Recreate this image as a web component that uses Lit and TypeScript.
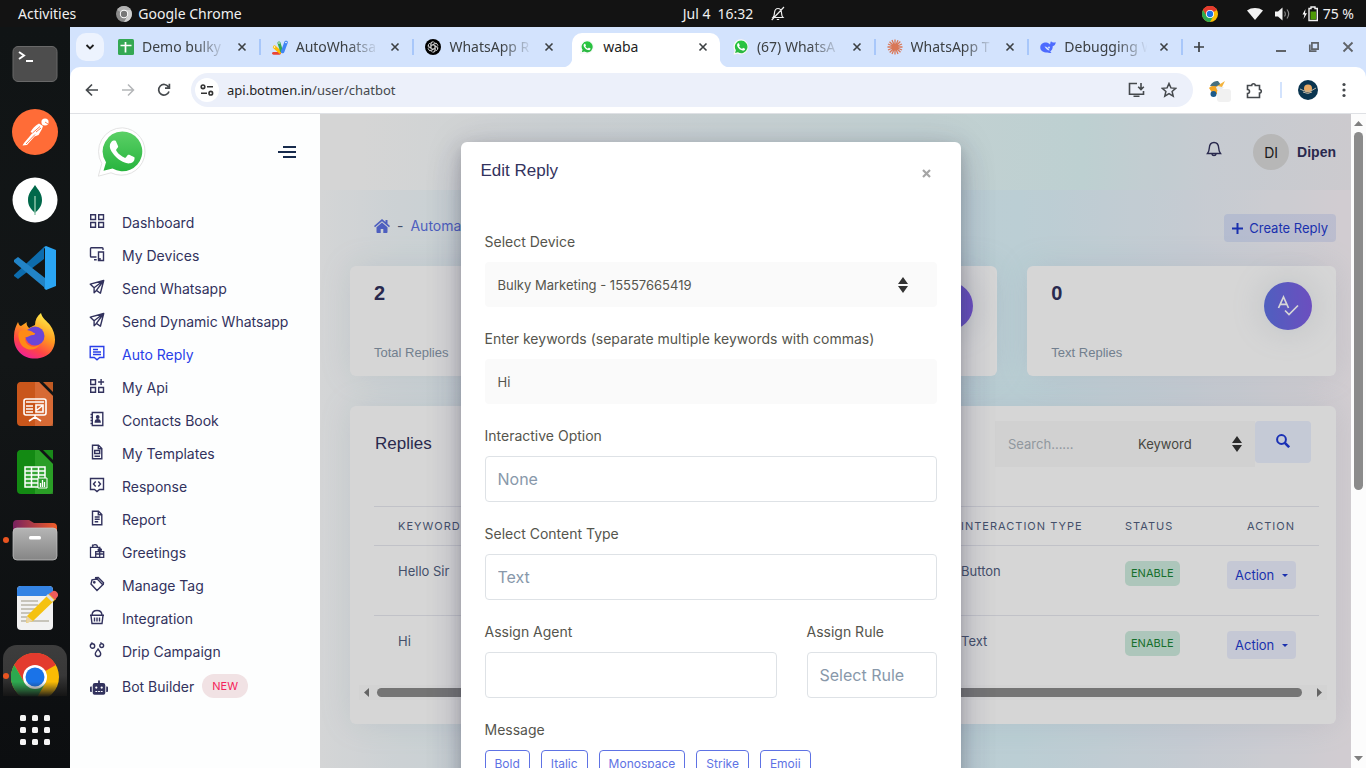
import { LitElement, html, css, svg } from "lit";
import { customElement } from "lit/decorators.js";

const handset =
  "M17.472 14.382c-.297-.149-1.758-.867-2.03-.967-.273-.099-.471-.148-.67.15-.197.297-.767.966-.94 1.164-.173.199-.347.223-.644.075-.297-.15-1.255-.463-2.39-1.475-.883-.788-1.48-1.761-1.653-2.059-.173-.297-.018-.458.13-.606.134-.133.298-.347.446-.52.149-.174.198-.298.298-.497.099-.198.05-.371-.025-.52-.075-.149-.669-1.612-.916-2.207-.242-.579-.487-.5-.669-.51-.173-.008-.371-.01-.57-.01-.198 0-.52.074-.792.372-.272.297-1.04 1.016-1.04 2.479 0 1.462 1.065 2.875 1.213 3.074.149.198 2.096 3.2 5.077 4.487.709.306 1.262.489 1.694.625.712.227 1.36.195 1.871.118.571-.085 1.758-.719 2.006-1.413.248-.694.248-1.289.173-1.413-.074-.124-.272-.198-.57-.347";

const whatsapp = (size: number, a = "#5bd066", b = "#27b43e") => html`<svg width=${size} height=${size} viewBox="0 0 50 50" aria-hidden="true">
  <defs><linearGradient id="wa" x1="0" y1="0" x2="0" y2="1"><stop offset="0" stop-color=${a} /><stop offset="1" stop-color=${b} /></linearGradient></defs>
  <path d="M25.500.8A23.700 23.700 0 1 1 14 45.800L1.300 49.200 4.800 36.500A23.700 23.700 0 0 1 25.500.8Z" fill="#fff" stroke="#e3e3e3" stroke-width="1" />
  <path d="M25.300 4.600A19.800 19.800 0 1 1 15.500 41.500L6.500 43.800 9 35.200A19.800 19.800 0 0 1 25.300 4.600Z" fill="url(#wa)" />
  <path d=${handset} fill="#fff" transform="translate(0.500 0.300) scale(2.050)" />
</svg>`;

const chromeLogo = (size: number) => html`<svg width=${size} height=${size} viewBox="0 0 48 48" aria-hidden="true">
  <circle cx="24" cy="24" r="24" fill="#fbbc04" />
  <path d="M24 24 3.200 12A24 24 0 0 1 44.800 12Z" fill="#e33b2e" />
  <path d="M24 12H44.800A24 24 0 0 0 3.200 12L13.600 30Z" fill="#e33b2e" />
  <path d="M3.200 12A24 24 0 0 0 24 48L34.400 30 24 36 13.600 30Z" fill="#2da94f" />
  <circle cx="24" cy="24" r="12" fill="#fff" /><circle cx="24" cy="24" r="9.500" fill="#1a73e8" />
</svg>`;

const tabIcons = {
  sheets: svg`<rect width="16" height="16" rx="1.500" fill="#34a853"/><path d="M7.500 3v10.500M2.500 6.500h11" stroke="#fff" stroke-width="1.700"/>`,
  script: svg`<path d="M1.500 14.300h6" stroke="#ea4335" stroke-width="2.800" stroke-linecap="round"/><path d="m2.500 8 5.500 5" stroke="#fbbc04" stroke-width="3.200" stroke-linecap="round"/><path d="m7 4 2.500 8" stroke="#34a853" stroke-width="3" stroke-linecap="round"/><path d="m14 3.500-3.300 9" stroke="#4285f4" stroke-width="3.600" stroke-linecap="round"/><circle cx="7" cy="4" r=".8" fill="#fff"/><circle cx="14" cy="3.500" r=".8" fill="#fff"/><circle cx="2.500" cy="8" r=".8" fill="#fff"/>`,
  gpt: svg`<circle cx="8" cy="8" r="8" fill="#000"/><g fill="none" stroke="#fff" stroke-width=".6">${[0, 60, 120, 180, 240, 300].map((r) => svg`<path d="M6.200 8.800V4.800a2 2 0 0 1 3.700-1M6.200 6.400 9.600 4.400a2 2 0 0 1 2.700.8" transform="rotate(${r} 8 8)"/>`)}</g>`,
  claude: svg`<path d="M8 .5v15M.5 8h15M2.500 2.700l11 10.600M13.300 2.500 2.700 13.500M5 1l6 14M11 1.200 5 15M1 5l14 6M15 5 1 11" stroke="#d97757" stroke-width="1.300"/>`,
  deepseek: svg`<path d="M.3 8.500C.3 5 3 3.300 6.500 3.500c1.500 0 2.500 1 3.500 2 .6-1.300.2-2.600 1.200-3.200.5 1.400 1.800 1.300 4.600.9-.2 2.300-1.500 3.600-3.100 4 .2 2.600-1 4.300-2.500 5.200l1.300 1.300c-1.800.4-3 .2-4.200-.2C3.300 13.500.3 12 .3 8.500Z" fill="#4d6bfe"/><path d="M4.500 7.500c2 0 4 1.500 5.200 4-2.200-.3-3.500-1.200-5.200-4Z" fill="#d3e3fd"/><circle cx="9" cy="8.500" r="1" fill="#d3e3fd"/>`,
};

const tabs = [
  { title: "Demo bulky", icon: tabIcons.sheets },
  { title: "AutoWhatsa", icon: tabIcons.script },
  { title: "WhatsApp R", icon: tabIcons.gpt },
  { title: "waba", wa: true, active: true },
  { title: "(67) WhatsA", wa: true },
  { title: "WhatsApp T", icon: tabIcons.claude },
  { title: "Debugging W", icon: tabIcons.deepseek },
];

const doc = svg`<path d="M3.500 1.200h6l3.300 3.300v10.300H3.500Z M9.300 1.200v3.500h3.500" />`;
const plane = svg`<path d="M14.700 1.500 1.300 5.200l3.800 3.500v5l2.300-2.300 4 2.800ZM14.700 1.500 5.100 8.700M14.700 1.500 7.400 11.400" stroke-linejoin="round"/>`;
const navItems = [
  { label: "Dashboard", icon: svg`<path d="M1.700 1.700h4.800v4.800H1.700zM9.700 1.700h4.800v4.800H9.700zM1.700 9.500h4.800v4.800H1.700zM9.700 9.500h4.800v4.800H9.700z"/>` },
  { label: "My Devices", icon: svg`<path d="M14 4V2.500c0-.5-.4-.8-.8-.8H2.300c-.5 0-.8.3-.8.8v7.700c0 .5.300.800.8.800h5.200M5 13.700h2.700M9.500 6h5v8.500h-5zM11 14v-2"/>` },
  { label: "Send Whatsapp", icon: plane },
  { label: "Send Dynamic Whatsapp", icon: plane },
  { label: "Auto Reply", active: true, icon: svg`<path d="M1.200 1.500h13.600v11H10.700L8 14.800 5.300 12.500H1.200ZM4 4.500h5M4 7h8M4 9.500h8"/>` },
  { label: "My Api", icon: svg`<path d="M1.700 1.700h4.800v4.800H1.700zM12.100 1v6M9.100 4h6M1.700 9.500h4.800v4.800H1.700zM9.700 9.500h4.800v4.800H9.700z"/>` },
  { label: "Contacts Book", icon: svg`<path d="M3.300 1.500h10.500v13H3.300ZM1.500 3.500h2M1.500 6.500h2M1.500 9.500h2M1.500 12.500h2"/><circle cx="8.700" cy="6" r="1.200" fill="currentColor"/><path d="M6.300 11c.2-3 4.600-3 4.800 0Z" fill="currentColor"/>` },
  { label: "My Templates", icon: svg`${doc}<path d="M5.700 6.500h5v3h-5zM5.500 12.200h5.500"/>` },
  { label: "Response", icon: svg`<path d="M1.500 1.500h13v11H10.500L8 14.500 5.500 12.500H1.500ZM6.700 4.500 4.500 7l2.200 2.500M9.300 4.500 11.500 7 9.300 9.500"/>` },
  { label: "Report", icon: svg`${doc}<path d="M5.700 7h5M5.700 9.300h5M5.700 11.700h3.500"/>` },
  { label: "Greetings", icon: svg`<path d="M6.500 14.300H1.500V4.300h9.300v2M3.500 4.300c0-3.600 5-3.600 5 0M3 1.800l1 .8M6.700 8.700h8v5.600h-8ZM6.500 11h8.500M10.700 8.500v6M10.700 8.500c-1.800-.5-2-2.500-.8-2.500.800 0 .8 1.500.8 2.500 0-1 .2-2.500 1-2.500 1.200 0 .8 2-1 2.500" stroke-width="1.300"/>` },
  { label: "Manage Tag", icon: svg`<path d="M3 3.800 2 8l6 6.500 5.800-5.800L8.200 3Zm3-2 3.200-.3 5.300 5.300-.3 2"/><circle cx="5.300" cy="6.300" r=".7"/>` },
  { label: "Integration", icon: svg`<path d="M1 6.300h14M2 6.500l1 8h10l1-8M3 6c.3-6 9.700-6 10 0M5.500 8.500v4M8 8.500v4M10.500 8.500v4"/>` },
  { label: "Drip Campaign", icon: svg`<circle cx="3.500" cy="4" r="2.200"/><circle cx="12.700" cy="3.600" r="1.900"/><path d="M9 7c2 3 2.700 3.500 2.700 4.800a2.700 2.700 0 0 1-5.400 0C6.300 10.500 7.500 9.500 9 7ZM11.500 1l1-.5M2 1.500 3.500.7"/>` },
];

const robot = html`<svg class="bot" width="18" height="15" viewBox="0 0 640 512" fill="currentColor" aria-hidden="true"><path d="M32 224h32v192H32a32 32 0 0 1-32-32V256a32 32 0 0 1 32-32zm512-48v272a64 64 0 0 1-64 64H160a64 64 0 0 1-64-64V176a80 80 0 0 1 80-80h112V32a32 32 0 0 1 64 0v64h112a80 80 0 0 1 80 80zm-280 80a40 40 0 1 0-40 40 40 40 0 0 0 40-40zm-8 128h-64v32h64zm96 0h-64v32h64zm104-128a40 40 0 1 0-40 40 40 40 0 0 0 40-40zm-8 128h-64v32h64zm192-128v128a32 32 0 0 1-32 32h-32V224h32a32 32 0 0 1 32 32z"/></svg>`;

const caretPair = html`<svg class="updown" width="10" height="16" viewBox="0 0 10 16" aria-hidden="true"><path d="M5 0l5 7H0zM5 16 0 9h10z" fill="#333" /></svg>`;

const closeX = html`<svg width="10" height="10" viewBox="0 0 10 10" aria-hidden="true"><path d="m1.500 1.500 7 7m0-7-7 7" stroke="currentColor" stroke-width="1.600" /></svg>`;

@customElement("desktop-bar")
class DesktopBar extends LitElement {
  static styles = css`
    :host { display: grid; grid-template-columns: 1fr auto 1fr; align-items: center; height: 27px; background: #131313; color: #f0f0f0; font: 14px/27px "Noto Sans", sans-serif; white-space: nowrap; }
    div { display: flex; align-items: center; }
    svg { display: block; }
    .left { padding-left: 18px; gap: 40px; }
    .app { gap: 6px; }
    .clock { gap: 18px; padding-left: 102px; }
    .right { justify-content: flex-end; padding-right: 12px; gap: 12px; }
    .chrome { margin-right: 17px; }
    .battery { gap: 4px; }
  `;
  render() {
    return html`
      <div class="left">
        <span>Activities</span>
        <div class="app">
          <svg width="16" height="16" viewBox="0 0 16 16"><circle cx="8" cy="8" r="8" fill="#8a8a8a" /><path d="M8 8 1.100 4A8 8 0 0 1 14.900 4Z" fill="#b0b0b0" /><path d="M8 4h6.900A8 8 0 0 1 8 16l3.500-6Z" fill="#cfcfcf" /><circle cx="8" cy="8" r="4.200" fill="#fff" /><circle cx="8" cy="8" r="3.200" fill="#777" /></svg>
          <span>Google Chrome</span>
        </div>
      </div>
      <div class="clock">
        <span>Jul 4&ensp;16:32</span>
        <svg width="14" height="15" viewBox="0 0 14 15" fill="none" stroke="#eee" stroke-width="1.200"><path d="M2 11.500c1.500-1.500 1.300-3 1.500-5C3.800 4 5 2.500 7 2.500s3.200 1.500 3.500 4c.2 2 0 3.500 1.500 5ZM.7 14 13 1M5.800 13.500h2.400" /></svg>
      </div>
      <div class="right">
        <div class="chrome">${chromeLogo(16)}</div>
        <svg width="16" height="12" viewBox="0 0 16 12"><path d="M0 2.500C4.500-.8 11.500-.8 16 2.500L8 12Z" fill="#f2f2f2" /></svg>
        <svg width="15" height="14" viewBox="0 0 15 14"><path d="M0 4.500h3L7.500.5v13L3 9.500H0Z" fill="#f2f2f2" /><path d="M9.500 4.500c1 1.500 1 3.500 0 5M12 2.500c2 2.700 2 6.300 0 9" fill="none" stroke="#888" stroke-width="1.200" /></svg>
        <div class="battery">
          <svg width="17" height="16" viewBox="0 0 17 16"><path d="M3.500 3 .5 8.500h2L1.500 13 5 7.200H3Z" fill="#fff" /><path d="M7 2.500h2V1h4v1.500h2.300v12H7Z" fill="none" stroke="#f0f0f0" stroke-width="1.400" /><path d="M8.500 5.500h5.500v8H8.500z" fill="#4e9a06" /></svg>
          <span>75 %</span>
        </div>
      </div>`;
  }
}

@customElement("app-dock")
class AppDock extends LitElement {
  static styles = css`
    :host { display: flex; flex-direction: column; background: linear-gradient(#101415, #131617 45%, #0c0e10); padding-top: 3px; }
    button { flex: none; position: relative; height: 68px; width: 70px; padding: 0; border: 0; background: none; display: flex; align-items: center; justify-content: center; }
    .current::before { content: ""; position: absolute; inset: 3px 3px 14px; border-radius: 14px 14px 0 0; background: linear-gradient(#3d3d3d, #383838 60%, #151515); }
    .current { align-items: flex-start; padding-top: 11px; }
    .current svg { -webkit-mask-image: linear-gradient(#000 60%, transparent 92%); mask-image: linear-gradient(#000 60%, transparent 92%); }
    .running::after { content: ""; position: absolute; left: 3px; top: 31px; width: 6px; height: 6px; border-radius: 50%; background: #e95420; }
    svg { position: relative; display: block; }
    .grid { height: 40px; }
  `;
  render() {
    return html`
      <button aria-label="Terminal"><svg width="46" height="46" viewBox="0 0 46 46"><rect x="1" y="5.500" width="44" height="35" rx="5" fill="#4d4d4d" stroke="#696969" /><path d="m7 11 5 3.500L7 18M14 20h7" fill="none" stroke="#fff" stroke-width="2" /></svg></button>
      <button aria-label="Postman"><svg width="46" height="46" viewBox="0 0 46 46"><circle cx="23" cy="23" r="23" fill="#ff6c37" /><path d="m31 17-4-2.500c-4 2-6.500 5-8.500 8.500l2 1-8.500 10-1.500 2.500 4.500-.5 7.500-8.500 4-1.500 3.500-6Z" fill="#fff" /><circle cx="33" cy="13" r="3.600" fill="#fff" /><path d="m33 13 3 2M20.500 24l7.500-6.500M14 35l9-9.500M24 23l5-4" stroke="#ff6c37" stroke-width=".9" /></svg></button>
      <button aria-label="MongoDB"><svg width="46" height="46" viewBox="0 0 46 46"><circle cx="23" cy="23" r="22.500" fill="#fff" /><path d="M23 8c3 5 7 8 7 15 0 6-3 9-7 13-4-4-7-7-7-13 0-7 4-10 7-15Z" fill="#00684a" /><path d="M23 19v19" stroke="#93c9ae" stroke-width="1.400" /></svg></button>
      <button aria-label="Visual Studio Code"><svg width="44" height="44" viewBox="0 0 44 44"><path d="M1 29 31 1v12L5 33 1 30Z" fill="#0d6cad" /><path d="M1 14l4-3 27 21v10L1 16Z" fill="#2284c7" /><path d="m31 1 2-1 10 4v36l-10 4-2-2 1-1V3Z" fill="#2aa5f4" /></svg></button>
      <button aria-label="Firefox"><svg width="44" height="46" viewBox="0 0 44 46"><defs><linearGradient id="ff" x1=".8" y1="0" x2=".3" y2="1"><stop offset="0" stop-color="#fff44f" /><stop offset=".45" stop-color="#ff9a1f" /><stop offset=".75" stop-color="#ff4545" /><stop offset="1" stop-color="#f0209a" /></linearGradient></defs><path d="M5 9c1 3 2 4 3 4l6-4c-1 2 0 4 2 6l6-3c0-5 2-9 6-12 1 5 6 8 9 12 9 12 6 30-10 33C12 48 0 38 1 23c0-6 2-10 4-14Z" fill="url(#ff)" /><circle cx="22" cy="23" r="9.500" fill="#6b46d6" /><path d="M7 18c4-2 11-1 14 2 2 0 1 2-1 2-3 0-5 3-8 2-1 8 9 13 15 7-4 9-19 7-21-5-1-4-1-6 1-8Z" fill="#ff8a16" /></svg></button>
      <button aria-label="Impress"><svg width="38" height="46" viewBox="0 0 38 46"><path d="M4 1h19l14 14v26a4 4 0 0 1-4 4H5a4 4 0 0 1-4-4V5a4 4 0 0 1 3-4Z" fill="#c9561b" /><path d="M19 1h4l14 14v30H19Z" fill="#dd7340" opacity=".7" /><path d="M27 1h10v10Z" fill="#c05a23" /><g fill="none" stroke="#fff" stroke-width="1.600"><rect x="8" y="18" width="22" height="16" rx="2" /><path d="M10 21h18M10 25h7M10 28h7M10 31h7M20 31V24h7v7Zm1-2 5-4M19 34v2M13 40l6-4 6 4" /></g></svg></button>
      <button aria-label="Calc"><svg width="38" height="46" viewBox="0 0 38 46"><path d="M4 1h19l14 14v26a4 4 0 0 1-4 4H5a4 4 0 0 1-4-4V5a4 4 0 0 1 3-4Z" fill="#138a13" /><path d="M19 1h4l14 14v30H19Z" fill="#34a62f" opacity=".7" /><path d="M27 1h10v10Z" fill="#198919" /><path d="M9 18h20v20H9ZM9 22h20M9 26h20M9 30h20M9 34h20M15.500 18v20M22.500 18v20" fill="#36a636" stroke="#fff" stroke-width="1.500" /><path d="M22 29h9v10h-9Z" fill="#2c9c2c" stroke="#fff" /><path d="M24.500 38v-4M26.500 38v-7M28.500 38v-5" stroke="#fff" stroke-width="1.300" /></svg></button>
      <button class="running" aria-label="Files"><svg width="46" height="42" viewBox="0 0 46 42"><defs><linearGradient id="fo"><stop offset="0" stop-color="#77215f" /><stop offset="1" stop-color="#f05d28" /></linearGradient><linearGradient id="fb" x1="0" y1="0" x2="0" y2="1"><stop offset="0" stop-color="#b5b5b5" /><stop offset="1" stop-color="#858585" /></linearGradient></defs><path d="M1 20V5a4 4 0 0 1 4-4h12l5 3h19a4 4 0 0 1 4 4v12Z" fill="url(#fo)" /><rect x="1" y="9" width="44" height="32" rx="4" fill="url(#fb)" stroke="#c7c7c7" stroke-width=".7" /><rect x="17" y="17" width="12" height="3.500" rx="1.500" fill="#fff" /></svg></button>
      <button aria-label="Text Editor"><svg width="46" height="46" viewBox="0 0 46 46"><rect x="5" y="1" width="36" height="44" rx="4" fill="#f2f2f2" /><path d="M5 11V5a4 4 0 0 1 4-4h28a4 4 0 0 1 4 4v6Z" fill="#3584e4" /><path d="M9 16h17M9 20h17M9 24h17M9 28h15M9 32h12M9 36h28" stroke="#b9b5a8" stroke-width="1.600" /><path d="m14 38 1-7L38 8l6 6-23 22Z" fill="#f5c211" /><path d="m14 38 1-7 6 5Z" fill="#e8d4a8" /><path d="m37 9 4-3c3-1 6 3 5 5l-3 4Z" fill="#ed5b5b" /><path d="m34 11 6 6 2-2-6-6Z" fill="#ddd" /></svg></button>
      <button class="current running" aria-label="Google Chrome">${chromeLogo(48)}</button>
      <button class="grid" aria-label="Show Applications"><svg width="30" height="30" viewBox="0 0 30 30" fill="#f5f5f5">${[0, 12, 24].map((y) => [0, 12, 24].map((x) => svg`<rect x=${x} y=${y} width="6" height="6" rx="1.500" />`))}</svg></button>`;
  }
}

@customElement("browser-chrome")
class BrowserChrome extends LitElement {
  static styles = css`
    :host { display: block; font: 14px/20px "Noto Sans", sans-serif; color: #3c4043; background: #d3e3fd; }
    button { border: 0; padding: 0; background: none; color: inherit; display: flex; align-items: center; justify-content: center; }
    svg { display: block; flex: none; }
    .strip { display: flex; align-items: center; height: 40px; padding: 0 12px 0 6px; }
    .search-tabs { width: 28px; height: 28px; border-radius: 10px; background: #edf3fe; color: #1f1f1f; margin-right: 3px; }
    .tabs { flex: 0 1 1076px; min-width: 0; display: flex; align-self: stretch; padding-top: 6px; }
    .tab { flex: 1 1 0; min-width: 0; display: flex; align-items: center; gap: 8px; height: 34px; padding: 0 12px 6px 11px; box-sizing: border-box; border-right: 2px solid transparent; position: relative; }
    .tab::after { content: ""; position: absolute; right: -2px; top: 6px; width: 2px; height: 16px; background: #a8c7fa; }
    .tab.active::after, .tab.before::after { display: none; }
    .tab.active::before { content: ""; position: absolute; inset: 0 0 0 4px; background: #fff; border-radius: 10px 10px 0 0; }
    .tab.active .corner { position: absolute; left: -6px; right: -10px; bottom: 0; height: 10px; background: radial-gradient(circle at 0 0, transparent 10px, #fff 11px) left / 10px 10px no-repeat, radial-gradient(circle at 100% 0, transparent 10px, #fff 11px) right / 10px 10px no-repeat; }
    .tab > svg, .tab > .title, .tab > button { position: relative; }
    .title { flex: 1; overflow: hidden; white-space: nowrap; -webkit-mask-image: linear-gradient(90deg, #000 60%, transparent 96%); mask-image: linear-gradient(90deg, #000 60%, transparent 96%); }
    .active .title { color: #1f1f1f; -webkit-mask-image: none; mask-image: none; }
    .fav { display: flex; position: relative; width: 16px; justify-content: center; }
    .plus { margin-left: 8px; width: 16px; }
    .window { margin-left: auto; display: flex; gap: 22px; color: #5f6368; }
    .toolbar { display: flex; align-items: center; height: 47px; box-sizing: border-box; background: #fff; border-radius: 10px 10px 0 0; border-bottom: 1px solid #dfe1e5; padding: 0 14px 0 14px; color: #45494d; }
    .nav { display: flex; gap: 20px; margin-right: 19px; }
    .nav button, .end button { width: 16px; height: 20px; }
    .forward { color: #b4b6b8; }
    .address { flex: 1; display: flex; align-items: center; height: 34px; padding: 0 16px 0 4px; box-sizing: border-box; border-radius: 17px; background: #ecf0fa; }
    .site { width: 24px; height: 24px; border-radius: 50%; background: #fff; margin-right: 8px; }
    .url { flex: 1; min-width: 0; white-space: nowrap; font-size: 13px; }
    .url b { font-weight: 400; color: #1f1f1f; }
    .actions { display: flex; gap: 16px; }
    .end { display: flex; align-items: center; gap: 18px; padding-left: 19px; }
    .end .more { margin-left: 2px; }
    .bar { width: 2px; height: 16px; background: #d3e3fd; }
  `;
  render() {
    return html`
      <div class="strip">
        <button class="search-tabs" aria-label="Search tabs"><svg width="10" height="8" viewBox="0 0 10 8"><path d="m1.500 2 3.500 3.500L8.500 2" fill="none" stroke="currentColor" stroke-width="1.800" /></svg></button>
        <div class="tabs">
          ${tabs.map(
            (t, i) => html`<div class="tab ${t.active ? "active" : ""} ${tabs[i + 1]?.active ? "before" : ""}">
              ${t.active ? html`<span class="corner"></span>` : ""}
              <span class="fav">${t.wa ? whatsapp(t.active ? 14 : 16, "#28c840", t.active ? "#2bb741" : "#12c443") : html`<svg width="16" height="16" viewBox="0 0 16 16" fill="none">${t.icon}</svg>`}</span>
              <span class="title">${t.title}</span>
              <button aria-label="Close tab">${closeX}</button>
            </div>`
          )}
        </div>
        <button class="plus" aria-label="New tab"><svg width="12" height="12" viewBox="0 0 12 12"><path d="M6 1v10M1 6h10" stroke="currentColor" stroke-width="1.700" /></svg></button>
        <div class="window">
          <button aria-label="Minimize"><svg width="10" height="10" viewBox="0 0 10 10"><path d="M0 9h10" stroke="currentColor" stroke-width="2" /></svg></button>
          <button aria-label="Restore"><svg width="12" height="12" viewBox="0 0 12 12" fill="none" stroke="currentColor" stroke-width="1.700"><path d="M3.900 1.900h6.200v6.200H3.900zM1.800 3.500v6.700h6.700" /></svg></button>
          <button aria-label="Close"><svg width="12" height="12" viewBox="0 0 12 12"><path d="m1.500 1.500 9 9m0-9-9 9" stroke="currentColor" stroke-width="1.800" /></svg></button>
        </div>
      </div>
      <div class="toolbar">
        <div class="nav">
          <button aria-label="Back"><svg width="14" height="14" viewBox="0 0 14 14" fill="none" stroke="currentColor" stroke-width="1.700"><path d="M13 7H2m5-5.500L1.500 7 7 12.500" /></svg></button>
          <button class="forward" aria-label="Forward"><svg width="14" height="14" viewBox="0 0 14 14" fill="none" stroke="currentColor" stroke-width="1.500"><path d="M1 7h11M7 1.500 12.500 7 7 12.500" /></svg></button>
          <button aria-label="Reload"><svg width="14" height="14" viewBox="0 0 14 14" fill="none" stroke="currentColor" stroke-width="1.700"><path d="M12 8.500A5.300 5.300 0 1 1 11.500 4M12.400.8v4.400H8" /></svg></button>
        </div>
        <div class="address">
          <button class="site" aria-label="Site information"><svg width="14" height="12" viewBox="0 0 14 12" fill="none" stroke="#333" stroke-width="1.600"><circle cx="3" cy="2.800" r="1.800" /><path d="M7 2.800h6M1 9.200h6" /><circle cx="10.800" cy="9.200" r="1.800" /></svg></button>
          <span class="url"><b>api.botmen.in</b>/user/chatbot</span>
          <div class="actions">
            <button aria-label="Install"><svg width="17" height="16" viewBox="0 0 17 16" fill="none" stroke="currentColor" stroke-width="1.600"><path d="M9 1.500H1.500v10.700h14V9M5.500 14.200h6M13 1v6M10.200 4.700 13 7.500l2.800-2.800" /></svg></button>
            <button aria-label="Bookmark"><svg width="16" height="16" viewBox="0 0 16 16" fill="none" stroke="currentColor" stroke-width="1.500"><path d="m8 1.500 1.900 4.400 4.800.4-3.600 3.100 1.100 4.700L8 11.600l-4.200 2.500 1.100-4.700L1.300 6.300l4.800-.4Z" /></svg></button>
          </div>
        </div>
        <div class="end">
          <button aria-label="Extension"><svg width="22" height="24" viewBox="0 0 22 24"><path d="M1 8c2-4 5-5 8-5l3 4-6 2Z" fill="#47707f" /><path d="M8 8 16 3l-3 6Z" fill="#f3b33d" /><path d="M0 10c3-3 8-2 10 0v6H4Z" fill="#f5a623" /><path d="M7 9h8l-3 3H8Z" fill="#e9edf0" /><circle cx="4.500" cy="16" r="3" fill="#1c5a8a" /><rect x="8" y="11" width="14" height="13" rx="3" fill="#f1f1f1" /></svg></button>
          <button aria-label="Extensions"><svg width="17" height="17" viewBox="0 0 17 17" fill="none" stroke="currentColor" stroke-width="1.600"><path d="M1.500 3.500h4.200a1.800 1.800 0 0 1 3.600 0h4.200v4a1.800 1.800 0 0 1 0 3.600v4.400h-12v-4a2 2 0 0 0 0-4Z" /></svg></button>
          <span class="bar"></span>
          <button aria-label="Profile"><svg width="20" height="20" viewBox="0 0 20 20"><circle cx="10" cy="10" r="10" fill="#0b3550" /><circle cx="10" cy="8.500" r="4" fill="#e8a964" /><path d="M2 9q8 5 16-1M5 12q5 3 9 0" stroke="#bcb6a5" fill="none" /></svg></button>
          <button class="more" aria-label="Menu"><svg width="4" height="16" viewBox="0 0 4 16" fill="currentColor"><circle cx="2" cy="2.500" r="1.600" /><circle cx="2" cy="8" r="1.600" /><circle cx="2" cy="13.500" r="1.600" /></svg></button>
        </div>
      </div>`;
  }
}

@customElement("side-nav")
class SideNav extends LitElement {
  static styles = css`
    :host { display: block; background: #fdfefe; color: #32325d; font: 14px/33px Inter, sans-serif; padding-top: 13px; }
    .brand { display: flex; justify-content: space-between; align-items: center; padding: 0 24px 0 27px; margin-bottom: 29px; }
    svg { display: block; flex: none; }
    .burger { border: 0; padding: 0; background: none; }
    a { display: flex; align-items: center; color: inherit; text-decoration: none; padding-left: 19px; white-space: nowrap; }
    a.active { color: #2a3fe8; }
    .icon { display: flex; width: 33px; padding-bottom: 3px; box-sizing: border-box; }
    .last { height: 36px; }
    .last .icon { padding: 3px 0 0 1px; }
    .badge { margin-left: 8px; padding: 0 10px; border-radius: 12px; background: #f1e2e4; color: #f5225a; font-size: 11px; line-height: 24px; }
  `;
  render() {
    return html`
      <div class="brand">
        ${whatsapp(50)}
        <button class="burger" aria-label="Toggle menu"><svg width="18" height="12" viewBox="0 0 18 12" fill="#172b4d"><path d="M5 0h13v2H5zM0 5h18v2H0zM5 10h13v2H5z" /></svg></button>
      </div>
      <nav>
        ${navItems.map(
          (n) => html`<a href="#" class=${n.active ? "active" : ""}><span class="icon"><svg width="16" height="16" viewBox="0 0 16 16" fill="none" stroke="currentColor" stroke-width="1.400">${n.icon}</svg></span>${n.label}</a>`
        )}
        <a href="#" class="last"><span class="icon">${robot}</span>Bot Builder<span class="badge">NEW</span></a>
      </nav>`;
  }
}

@customElement("replies-page")
class RepliesPage extends LitElement {
  static styles = css`
    :host { display: block; color: #525f7f; font: 13px/20px Inter, sans-serif; background: linear-gradient(90deg, #fdfeff, #f3fafd 8%, #e5f5fb 30%, #dff6fd 68%, #ebf2fb 84%, #faf4f9); }
    svg { display: block; flex: none; }
    button, input, select { font: inherit; color: inherit; border: 0; margin: 0; border-radius: 4px; }
    header { display: flex; align-items: center; justify-content: flex-end; height: 76px; padding: 0 15px; background: linear-gradient(90deg, #fefefe 4%, #f5fbfd 22%, #e2f8fa 74%, #ecf2f9 86%, #f3f1f6); color: #32325d; }
    .bell { padding: 0; background: none; margin: 0 31px 6px 0; }
    .avatar { width: 36px; height: 36px; border-radius: 50%; background: #dadada; color: #222; line-height: 38px; text-align: center; font-size: 14px; margin-right: 8px; }
    .user { font: 700 14px/20px "Liberation Sans", sans-serif; }
    main { padding: 24px 15px 24px 30px; }
    .crumbs { display: flex; align-items: center; justify-content: space-between; height: 28px; margin-bottom: 24px; padding-left: 24px; }
    .trail { display: flex; align-items: center; gap: 7px; font-size: 14px; margin-bottom: 4px; }
    a { color: #5e72e4; text-decoration: none; }
    .soft { display: flex; align-items: center; gap: 6px; height: 28px; padding: 0 8px; background: rgba(70, 110, 250, .11); color: #1f3ad0; }
    .soft.create { background: rgba(50, 100, 230, .12); }
    .stats { display: grid; grid-template-columns: repeat(3, 1fr); gap: 30px; margin-bottom: 30px; }
    .card { background: #fff; border-radius: 6px; box-shadow: 0 0 32px rgba(136, 152, 170, .15); }
    .list { padding-bottom: 24px; }
    .stat { display: flex; justify-content: space-between; height: 110px; box-sizing: border-box; padding: 16px 24px 13px; font-family: "Liberation Sans", sans-serif; }
    .stat > div { display: flex; flex-direction: column; justify-content: space-between; color: #8898aa; }
    .stat strong { font-size: 20px; line-height: 22px; color: #32325d; }
    .disc { width: 48px; height: 48px; border-radius: 50%; display: flex; align-items: center; justify-content: center; background: linear-gradient(87deg, #5e72e4, #825ee4); box-shadow: 0 0 32px rgba(136, 152, 170, .25); }
    .head { display: flex; justify-content: space-between; align-items: flex-start; padding: 15px 25px 39px; }
    h3 { margin: 13px 0 0; font: 400 17px/20px "Liberation Sans", sans-serif; color: #32325d; }
    .search { display: flex; align-items: flex-start; }
    .search input, .pick select { height: 46px; box-sizing: border-box; background: #fafafa; color: #55554d; padding: 0 13px; border-radius: 0; outline: 0; }
    .search input { width: 130px; }
    .search input::placeholder { color: #adb5bd; }
    .pick { display: grid; }
    .pick select { width: 130px; appearance: none; }
    .pick > * { grid-area: 1 / 1; }
    .updown { justify-self: end; align-self: center; margin-right: 13px; }
    .find { width: 56px; height: 42px; display: flex; justify-content: center; padding: 13px 0; background: #ebf1ff; color: #1f3ad8; }
    .find svg { align-self: flex-start; }
    .scroll { margin: 0 9px 0 9px; }
    table { width: calc(100% - 23px); margin-left: 15px; border-collapse: collapse; table-layout: fixed; }
    th, td { text-align: left; font-weight: 400; padding: 0 24px; border-top: 1px solid #e6e8ef; vertical-align: top; }
    th { height: 38px; vertical-align: middle; font-size: 11px; letter-spacing: 1px; text-transform: uppercase; white-space: nowrap; }
    td { height: 54px; padding-top: 15px; }
    .type { width: 116px; }
    .status { width: 54px; }
    .action { width: 68px; text-align: right; }
    .action .soft { margin-left: auto; gap: 8px; }
    .badge { display: inline-block; border-radius: 5px; background: #cfecdf; color: #1a8535; font-size: 11px; line-height: 25px; padding: 0 6px; }
    .hbar { display: flex; align-items: center; justify-content: space-between; height: 15px; padding: 0 5px; background: #fcfcfc; }
    .hbar span { flex: 1; margin: 0 15px 0 8px; height: 9px; border-radius: 5px; background: #8b8b8b; }
  `;
  render() {
    const disc = html`<span class="disc"><svg width="22" height="22" viewBox="0 0 22 22" fill="none" stroke="#fff" stroke-width="1.700"><path d="M1.500 13 6.500 2l5 11M3.500 9.300h6M8 15.500l4 4 9-9" /></svg></span>`;
    const stats = [
      { value: "2", label: "Total Replies" },
      { value: "", label: "" },
      { value: "0", label: "Text Replies" },
    ];
    const rows = [
      ["Hello Sir", "Button"],
      ["Hi", "Text"],
    ];
    return html`
      <header>
        <button class="bell" aria-label="Notifications"><svg width="16" height="16" viewBox="0 0 16 16" fill="none" stroke="#32325d" stroke-width="1.400"><path d="M1.500 12.500c1.500-2 1.700-3 1.800-5.500C3.500 3.500 5 1.500 8 1.500S12.500 3.500 12.700 7c.1 2.500.3 3.500 1.800 5.500ZM5.800 12.800c.5 2.200 3.900 2.200 4.400 0" /></svg></button>
        <span class="avatar">DI</span><span class="user">Dipen</span>
      </header>
      <main>
        <div class="crumbs">
          <div class="trail">
            <a href="#" aria-label="Home"><svg width="16" height="14" viewBox="0 0 16 14" fill="currentColor"><path d="M8 0 0 7l1 1.200 7-6 7 6L16 7l-2.500-2.200V1h-2v2ZM2.500 8.200V13c0 .5.300 1 .8 1h3.400v-4h2.600v4h3.400c.5 0 .8-.5.8-1V8.200L8 3.600Z" /></svg></a>
            <span>-</span><a href="#">Automatic Reply</a>
          </div>
          <button class="soft create"><svg width="11" height="11" viewBox="0 0 11 11"><path d="M5.500 0v11M0 5.500h11" stroke="currentColor" stroke-width="2" /></svg>Create Reply</button>
        </div>
        <div class="stats">
          ${stats.map((s) => html`<section class="card stat"><div><strong>${s.value}</strong><span>${s.label}</span></div>${disc}</section>`)}
        </div>
        <section class="card list">
          <div class="head">
            <h3>Replies</h3>
            <div class="search">
              <input type="text" placeholder="Search......" aria-label="Search" />
              <div class="pick"><select aria-label="Search by"><option>Keyword</option></select>${caretPair}</div>
              <button class="find" aria-label="Search"><svg width="14" height="14" viewBox="0 0 14 14" fill="none" stroke="currentColor" stroke-width="2"><circle cx="5.500" cy="5.500" r="4.400" /><path d="m8.800 8.800 4.400 4.400" stroke-width="2.600" /></svg></button>
            </div>
          </div>
          <div class="scroll">
            <table>
              <thead><tr><th>Keyword</th><th class="type">Interaction Type</th><th class="status">Status</th><th class="action">Action</th></tr></thead>
              <tbody>
                ${rows.map(
                  (r) => html`<tr><td>${r[0]}</td><td class="type">${r[1]}</td><td><span class="badge">ENABLE</span></td>
                    <td class="action"><button class="soft">Action<svg width="6" height="3" viewBox="0 0 6 3"><path d="M0 0h6L3 3z" fill="currentColor" /></svg></button></td></tr>`
                )}
              </tbody>
            </table>
            <div class="hbar">
              <svg width="5" height="9" viewBox="0 0 5 9"><path d="M5 0v9L0 4.500z" fill="#777" /></svg>
              <span></span>
              <svg width="5" height="9" viewBox="0 0 5 9"><path d="M0 0v9l5-4.500z" fill="#777" /></svg>
            </div>
          </div>
        </section>
      </main>`;
  }
}

@customElement("edit-reply")
class EditReply extends LitElement {
  static styles = css`
    :host { display: block; background: #fff; border-radius: 6px; box-shadow: 0 15px 35px rgba(50, 50, 93, .2), 0 5px 15px rgba(0, 0, 0, .17), 0 0 40px rgba(50, 50, 93, .1); color: #55554d; font: 14px/20px Inter, sans-serif; }
    button, input, select { font: inherit; color: inherit; margin: 0; box-sizing: border-box; }
    header { display: flex; justify-content: space-between; align-items: center; padding: 18px 30px 51px 20px; }
    h2 { margin: 0; font: 400 17px/21px "Liberation Sans", sans-serif; color: #32325d; }
    .close { display: flex; border: 0; padding: 6px 0 0; background: none; color: #a5a5a5; }
    form { padding: 0 24px 60px; }
    .group { display: grid; row-gap: 10px; margin-bottom: 22px; }
    label, .label { grid-area: 1 / 1; }
    input, select { grid-area: 2 / 1; width: 100%; min-width: 0; appearance: none; outline: 0; border: 0; border-radius: 4px; height: 45px; padding: 0 13px; background: #fafafa; font-size: 13px; }
    .outlined select { height: 46px; border: 1px solid #dee2e6; padding: 0 12px; background: #fff; color: #8898aa; font-size: 16px; }
    .updown { display: block; grid-area: 2 / 1; justify-self: end; align-self: center; margin-right: 29px; }
    .row { display: flex; margin: 0 -15px; }
    .row .group { box-sizing: border-box; padding: 0 15px; }
    .wide { flex: 2 1 0; }
    .narrow { flex: 0 0 160px; }
    .tools { display: flex; gap: 11px; }
    .tools button { height: 28px; padding: 0 9px; border: 1px solid #5e72e4; border-radius: 4px; background: #fff; color: #5e72e4; font-size: 12px; }
  `;
  render() {
    return html`
      <header>
        <h2>Edit Reply</h2>
        <button class="close" aria-label="Close"><svg width="9" height="9" viewBox="0 0 9 9"><path d="m1 1 7 7m0-7-7 7" stroke="currentColor" stroke-width="2.200" /></svg></button>
      </header>
      <form>
        <div class="group"><label for="device">Select Device</label><select id="device"><option>Bulky Marketing - 15557665419</option></select>${caretPair}</div>
        <div class="group"><label for="keys">Enter keywords (separate multiple keywords with commas)</label><input id="keys" type="text" value="Hi" /></div>
        <div class="group outlined"><label for="interactive">Interactive Option</label><select id="interactive"><option>None</option></select></div>
        <div class="group outlined"><label for="content">Select Content Type</label><select id="content"><option>Text</option></select></div>
        <div class="row">
          <div class="group outlined wide"><label for="agent">Assign Agent</label><select id="agent"><option></option></select></div>
          <div class="group outlined narrow"><label for="rule">Assign Rule</label><select id="rule"><option>Select Rule</option></select></div>
        </div>
        <div class="group">
          <span class="label">Message</span>
          <div class="tools">${["Bold", "Italic", "Monospace", "Strike", "Emoji"].map((t) => html`<button type="button">${t}</button>`)}</div>
        </div>
      </form>`;
  }
}

@customElement("app-root")
class AppRoot extends LitElement {
  static styles = css`
    :host { display: flex; flex-direction: column; height: 100vh; overflow: hidden; }
    desktop-bar { flex: none; }
    .desk { flex: 1; min-height: 0; display: flex; }
    app-dock { flex: none; overflow: hidden; }
    .window { flex: 1; min-width: 0; display: flex; flex-direction: column; }
    browser-chrome { flex: none; }
    .view { flex: 1; min-height: 0; display: flex; }
    .page { flex: 1; min-width: 0; position: relative; display: flex; overflow: hidden; }
    side-nav { flex: 0 0 250px; z-index: 2; }
    replies-page { flex: 1; min-width: 0; }
    .backdrop { position: absolute; inset: 0; z-index: 1; background: rgba(0, 0, 0, .16); }
    .layer { position: absolute; inset: 0; z-index: 3; overflow: hidden; }
    edit-reply { max-width: 500px; margin: 28px auto; }
    .vbar { flex: none; width: 15px; box-sizing: border-box; padding: 7px 3px; display: flex; flex-direction: column; align-items: center; background: #fcfcfc; }
    .thumb { width: 9px; flex: 0 0 56%; margin-top: 6px; border-radius: 5px; background: #8b8b8b; }
    .down { margin-top: auto; }
    svg { display: block; flex: none; }
  `;
  render() {
    return html`
      <desktop-bar></desktop-bar>
      <div class="desk">
        <app-dock></app-dock>
        <div class="window">
          <browser-chrome></browser-chrome>
          <div class="view">
            <div class="page">
              <side-nav></side-nav>
              <replies-page></replies-page>
              <div class="backdrop"></div>
              <div class="layer"><edit-reply></edit-reply></div>
            </div>
            <div class="vbar">
              <svg width="9" height="5" viewBox="0 0 9 5"><path d="M4.500 0 9 5H0z" fill="#7f7f7f" /></svg>
              <div class="thumb"></div>
              <svg class="down" width="9" height="5" viewBox="0 0 9 5"><path d="M0 0h9L4.500 5z" fill="#7f7f7f" /></svg>
            </div>
          </div>
        </div>
      </div>`;
  }
}
